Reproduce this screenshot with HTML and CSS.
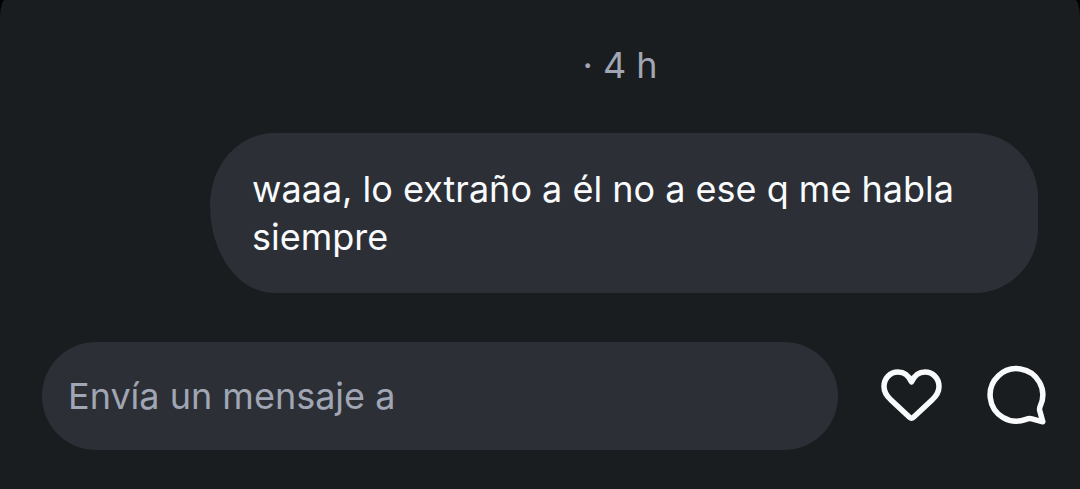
FILE: index.html
```html
<!DOCTYPE html>
<html lang="es">
<head>
<meta charset="utf-8">
<meta name="viewport" content="width=device-width, initial-scale=1">
<title>Mensajes</title>
<link rel="stylesheet" href="styles.css">
</head>
<body>
<main class="chat">
  <header class="stamp"><time>· 4 h</time></header>
  <section class="thread">
    <p class="bubble">waaa, lo extraño a él no a ese q me habla siempre</p>
  </section>
  <form class="composer">
    <input class="field" type="text" placeholder="Envía un mensaje a" aria-label="Envía un mensaje">
    <button class="action" type="button" aria-label="Me gusta">
      <svg viewBox="0 0 64 64" aria-hidden="true"><path d="M32.500 18C29.500 11 25 8 19 8C11 8 5 14.500 5 22.500C5 28.500 7.500 32 12 36L30.500 53.200Q32.500 55 34.500 53.200L53 36C57.500 32 60 28.500 60 22.500C60 14.500 54 8 46 8C40 8 35.500 11 32.500 18Z"/></svg>
    </button>
    <button class="action" type="button" aria-label="Comentar">
      <svg viewBox="0 0 64 64" aria-hidden="true"><path d="M56.500 41.500A26.300 26.300 0 1 0 42 55.400C44.500 54.400 45.500 54.200 48 54.900L58.800 57.800L55.700 46.500C55.200 44.500 55.600 43.700 56.500 41.500Z"/></svg>
    </button>
  </form>
</main>
</body>
</html>
```
FILE: styles.css
```css
* {
  box-sizing: border-box;
}

body {
  margin: 0;
  background: #000;
  color: #f8fafc;
  font: 36px/48px Inter, "Open Sans", sans-serif;
}

.chat {
  display: flex;
  flex-direction: column;
  min-height: 100vh;
  padding: 41px 32px 39px 42px;
  background: #1a1d1f;
  border-radius: 5px 5px 0 0 / 18px 18px 0 0;
}

.stamp {
  padding-left: 150px;
  margin-bottom: 44px;
  color: #a0a6b3;
  text-align: center;
}

.thread {
  padding: 0 10px 0 168px;
  margin-bottom: 49px;
}

.bubble {
  margin: 0;
  padding: 32px 42px;
  background: #2c2f36;
  border-radius: 64px 64px 64px 64px / 72px 64px 64px 88px;
}

.composer {
  display: flex;
  align-items: center;
  gap: 41px;
}

.field {
  flex: 1;
  min-width: 0;
  height: 108px;
  padding: 0 26px;
  border: 0;
  border-radius: 54px;
  background: #2c2f36;
  color: inherit;
  font: inherit;
}

.field::placeholder {
  color: #a0a6b3;
  opacity: 1;
}

.action {
  width: 64px;
  height: 64px;
  padding: 0;
  border: 0;
  background: none;
  color: inherit;
}

.action svg {
  display: block;
  width: 64px;
  height: 64px;
  fill: none;
  stroke: currentColor;
  stroke-width: 5.500;
  stroke-linejoin: round;
}
```
